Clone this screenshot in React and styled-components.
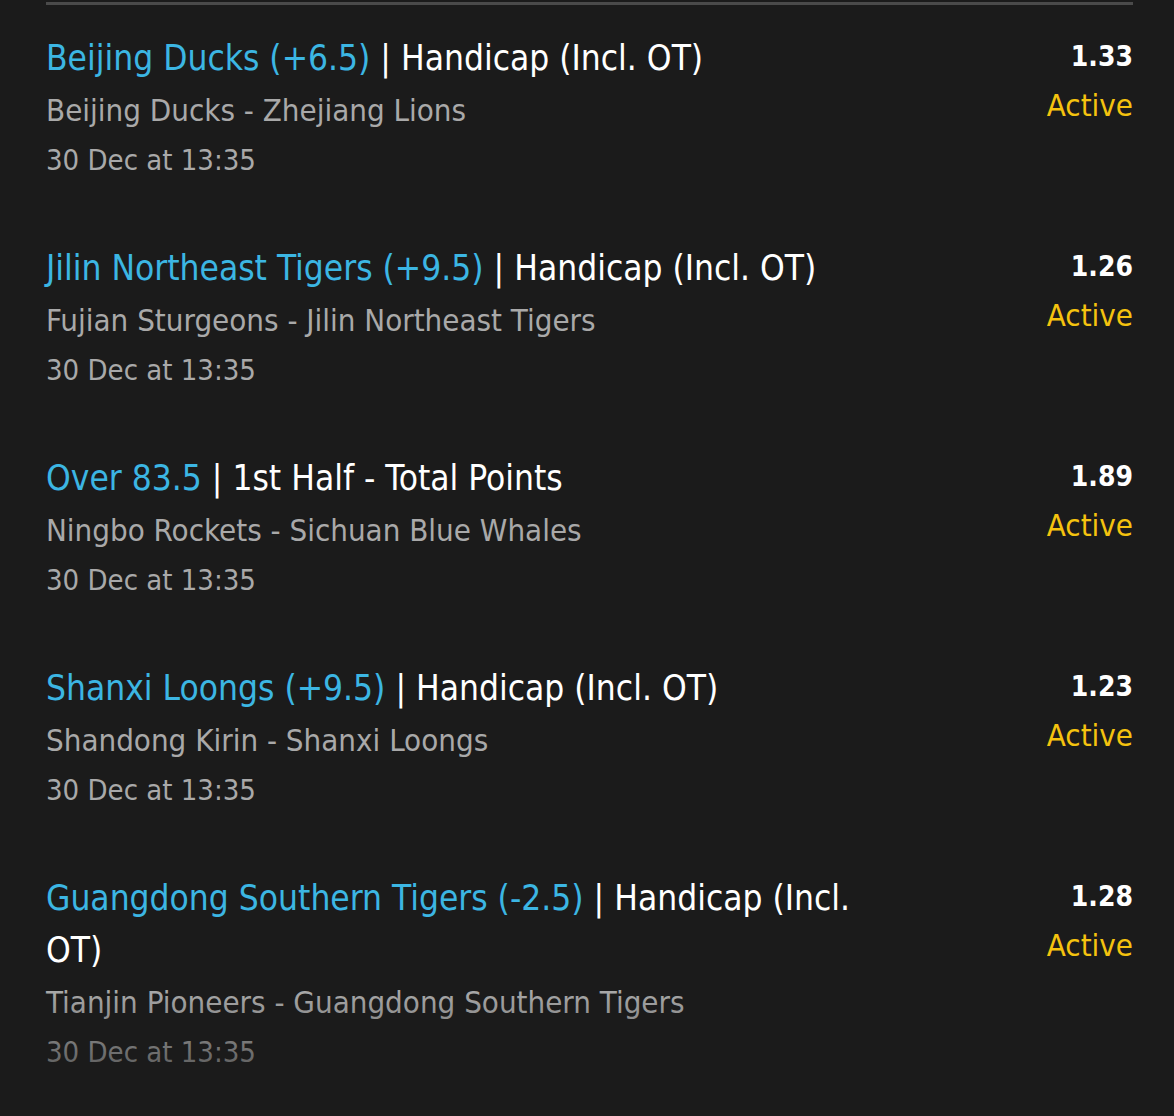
import styled, { createGlobalStyle } from 'styled-components';

const GlobalStyle = createGlobalStyle`
  html, body {
    margin: 0;
    padding: 0;
    background: #1b1b1b;
  }
  body {
    font-family: "DejaVu Sans Condensed", "Liberation Sans Narrow", Roboto, sans-serif;
    -webkit-font-smoothing: antialiased;
  }
`;

const Page = styled.div`
  position: relative;
  height: 1116px;
  overflow: hidden;
  background: #1b1b1b;
  padding: 2px 41px 0 46px;
  box-sizing: border-box;

  /* scroll fade at the bottom edge */
  &::after {
    content: '';
    position: absolute;
    left: 0;
    right: 0;
    bottom: 0;
    height: 126px;
    background: linear-gradient(to bottom, rgba(27, 27, 27, 0), rgba(27, 27, 27, 0.83));
    pointer-events: none;
  }
`;

const List = styled.div`
  border-top: 3px solid #4a4a4a;
`;

const Item = styled.div`
  display: flex;
  justify-content: space-between;
  gap: 40px;
  padding: 27px 0 31px;
`;

const Info = styled.div`
  flex: 1;
  min-width: 0;
`;

const Title = styled.div`
  font-size: 35px;
  line-height: 52px;
  color: #ffffff;
`;

const Selection = styled.span`
  color: #3cb6e3;
`;

const Sub = styled.div`
  font-size: ${(p) => (p.$date ? '29px' : '31px')};
  line-height: ${(p) => (p.$date ? '48px' : '52px')};
  color: #a9a9a9;
`;

const Side = styled.div`
  width: 180px;
  flex-shrink: 0;
  text-align: right;
  padding-top: 1px;
`;

const Odds = styled.div`
  font-size: 28px;
  line-height: 48px;
  font-weight: 700;
  color: #ffffff;
`;

const Status = styled.div`
  font-size: 31px;
  line-height: 48px;
  color: #f5c30f;
`;

const bets = [
  {
    pick: 'Beijing Ducks (+6.5)',
    market: 'Handicap (Incl. OT)',
    match: 'Beijing Ducks - Zhejiang Lions',
    odds: '1.33',
  },
  {
    pick: 'Jilin Northeast Tigers (+9.5)',
    market: 'Handicap (Incl. OT)',
    match: 'Fujian Sturgeons - Jilin Northeast Tigers',
    odds: '1.26',
  },
  {
    pick: 'Over 83.5',
    market: '1st Half - Total Points',
    match: 'Ningbo Rockets - Sichuan Blue Whales',
    odds: '1.89',
  },
  {
    pick: 'Shanxi Loongs (+9.5)',
    market: 'Handicap (Incl. OT)',
    match: 'Shandong Kirin - Shanxi Loongs',
    odds: '1.23',
  },
  {
    pick: 'Guangdong Southern Tigers (-2.5)',
    market: 'Handicap (Incl. OT)',
    match: 'Tianjin Pioneers - Guangdong Southern Tigers',
    odds: '1.28',
  },
];

export default function App() {
  return (
    <>
      <GlobalStyle />
      <Page>
        <List>
          {bets.map((bet) => (
            <Item key={bet.pick}>
              <Info>
                <Title>
                  <Selection>{bet.pick}</Selection> | {bet.market}
                </Title>
                <Sub>{bet.match}</Sub>
                <Sub $date>30 Dec at 13:35</Sub>
              </Info>
              <Side>
                <Odds>{bet.odds}</Odds>
                <Status>Active</Status>
              </Side>
            </Item>
          ))}
        </List>
      </Page>
    </>
  );
}
